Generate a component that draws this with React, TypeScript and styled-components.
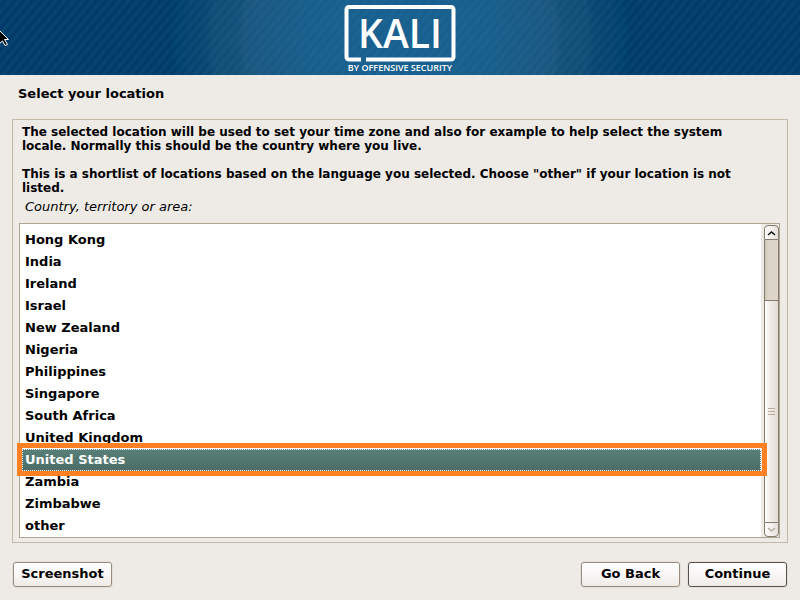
import React, { useState } from "react";
import styled, { createGlobalStyle } from "styled-components";

const GlobalStyle = createGlobalStyle`
  *, *::before, *::after { box-sizing: border-box; }
  body {
    margin: 0;
    background: #eeebe7;
    color: #000;
    font: bold 13px/14px "DejaVu Sans", Verdana, sans-serif;
  }
`;

const Page = styled.div`
  position: relative;
  display: flex;
  flex-direction: column;
  min-height: 100vh;
`;

const Banner = styled.header`
  display: flex;
  justify-content: center;
  height: 75px;
  background:
    repeating-linear-gradient(130deg, rgba(50, 130, 150, 0.12) 0, rgba(50, 130, 150, 0.12) 2px, transparent 4px, transparent 5px, rgba(50, 130, 150, 0.12) 7px),
    radial-gradient(circle 230px at center, #175f90 0, #185e8d 90px, #1b5680 156px, #13507a 162px, #104c76 188px, #0a4672 194px, #003f6e 224px, transparent 230px),
    #003a6a;
`;

const Logo = styled.svg`
  width: 112px;
  height: 75px;
  font-family: "Open Sans", "Noto Sans", sans-serif;
`;

const Pointer = styled.svg`
  position: absolute;
  top: 29px;
  left: 0;
  width: 10px;
  height: 18px;
`;

const Title = styled.h1`
  margin: 12px 18px 18px;
  font-size: 13px;
  line-height: 14px;
`;

const Panel = styled.main`
  display: flex;
  flex: 1;
  flex-direction: column;
  margin: 0 12px;
  padding: 5px 7px 4px 6px;
  border: 1px solid #c4b8a9;
`;

const Description = styled.p`
  margin: 0 24px 14px 3px;
  font-size: 12px;

  & + & { margin-bottom: 5px; }
`;

const ListLabel = styled.label`
  margin: 0 6px 9px;
  font-weight: normal;
  font-style: italic;
`;

const ListFrame = styled.div`
  position: relative;
  display: flex;
  flex: 1;
  gap: 3px;
  border: 1px solid #b0a593;
`;

const LocationList = styled.select`
  flex: 1;
  min-width: 0;
  height: 313px;
  margin: 0;
  padding: 5px 0 0 2px;
  border: 0;
  border-radius: 0;
  outline: 0;
  appearance: none;
  overflow: hidden;
  background: #fff;
  color: #000;
  font: inherit;
`;

const Location = styled.option`
  height: 22px;
  min-height: 22px;
  padding: 3px 3px 0;
  font: inherit;

  &:checked {
    background: linear-gradient(#588078, #4b6c67);
    outline: 1px dotted #fff;
    outline-offset: -1px;
    -webkit-text-fill-color: #fff;
  }
`;

const Highlight = styled.div`
  position: absolute;
  top: 219px;
  right: 12px;
  left: -3px;
  height: 33px;
  border: 5px solid #ff8022;
  pointer-events: none;
`;

const ScrollBar = styled.div`
  display: flex;
  flex-direction: column;
  width: 15px;
  padding-top: 1px;
`;

const ScrollArrow = styled.button<{ $end?: boolean }>`
  display: grid;
  place-items: center;
  height: 15px;
  padding: 0;
  border: 1px solid #857c6e;
  border-radius: ${(p) => (p.$end ? "0 0 4px 4px" : "4px 4px 0 0")};
  background: linear-gradient(90deg, #fff, #e6e0d9);
  color: ${(p) => (p.$end ? "#b5aea4" : "#111")};
`;

const Trough = styled.div`
  height: 60px;
  border: solid #857c6e;
  border-width: 0 1px;
  background: linear-gradient(90deg, #cfc6bb, #ddd5c9 30%);
`;

const Thumb = styled.div`
  display: grid;
  flex: 1;
  place-items: center;
  border: solid #857c6e;
  border-width: 1px 1px 0;
  background: linear-gradient(90deg, #fff, #f0ece7 40%, #e2dcd4);
`;

const Grip = styled.svg`
  width: 7px;
  height: 8px;
`;

const Footer = styled.footer`
  display: flex;
  gap: 8px;
  padding: 19px 13px 13px;
`;

const ActionButton = styled.button<{ $primary?: boolean }>`
  width: 99px;
  height: 25px;
  padding: 0 0 2px;
  border: 1px solid ${(p) => (p.$primary ? "#55504a" : "#988b7c")};
  border-radius: 3px;
  background: linear-gradient(#fff, #f8f6f5 55%, #eeeae6);
  box-shadow: 0 0 0 1px #e4dfd9;
  color: #000;
  font: inherit;
`;

const Spacer = styled.div`
  flex: 1;
`;

const locations = [
  "Hong Kong", "India", "Ireland", "Israel", "New Zealand", "Nigeria", "Philippines",
  "Singapore", "South Africa", "United Kingdom", "United States", "Zambia", "Zimbabwe", "other",
];

export default function App() {
  const [location, setLocation] = useState("United States");

  return (
    <Page>
      <GlobalStyle />
      <Banner>
        <Logo viewBox="0 0 112 75" role="img" aria-label="Kali by Offensive Security">
          <path d="M17 59.5H5a2.500 2.500 0 0 1-2.500-2.500V9.500A2.500 2.500 0 0 1 5 7h102a2.500 2.500 0 0 1 2.500 2.500V57a2.500 2.500 0 0 1-2.500 2.500H22" fill="none" stroke="#fff" strokeWidth="4" />
          <text x="56" y="48" fill="#fff" fontSize="39" fontWeight="600" textAnchor="middle">KALI</text>
          <text x="56" y="71" fill="#fff" fontSize="9" fontWeight="600" textAnchor="middle">BY OFFENSIVE SECURITY</text>
        </Logo>
      </Banner>
      <Pointer viewBox="0 0 10 18" aria-hidden="true">
        <path d="M-1 1L8.500 10.500H4.500L7.500 15.500L5 16.500L2.500 12L-1 15Z" fill="#000" stroke="#fff" />
      </Pointer>
      <Title>Select your location</Title>
      <Panel>
        <Description>
          The selected location will be used to set your time zone and also for example to help select the system locale. Normally this should be the country where you live.
        </Description>
        <Description>
          This is a shortlist of locations based on the language you selected. Choose "other" if your location is not listed.
        </Description>
        <ListLabel htmlFor="location">Country, territory or area:</ListLabel>
        <ListFrame>
          <LocationList id="location" size={14} value={location} onChange={(e) => setLocation(e.target.value)}>
            {locations.map((name) => <Location key={name} value={name}>{name}</Location>)}
          </LocationList>
          <ScrollBar>
            <ScrollArrow type="button" aria-label="Scroll up">
              <svg width="9" height="6" viewBox="0 0 9 6"><path d="M1 5L4.500 2L8 5" fill="none" stroke="currentColor" strokeWidth="1.500" /></svg>
            </ScrollArrow>
            <Trough />
            <Thumb>
              <Grip viewBox="0 0 7 8"><path d="M0 .5H7M0 3.500H7M0 6.500H7" stroke="#b8ad9b" /></Grip>
            </Thumb>
            <ScrollArrow type="button" aria-label="Scroll down" $end>
              <svg width="9" height="6" viewBox="0 0 9 6"><path d="M1 1L4.500 4L8 1" fill="none" stroke="currentColor" strokeWidth="1.500" /></svg>
            </ScrollArrow>
          </ScrollBar>
          <Highlight />
        </ListFrame>
      </Panel>
      <Footer>
        <ActionButton type="button">Screenshot</ActionButton>
        <Spacer />
        <ActionButton type="button">Go Back</ActionButton>
        <ActionButton type="button" $primary>Continue</ActionButton>
      </Footer>
    </Page>
  );
}
